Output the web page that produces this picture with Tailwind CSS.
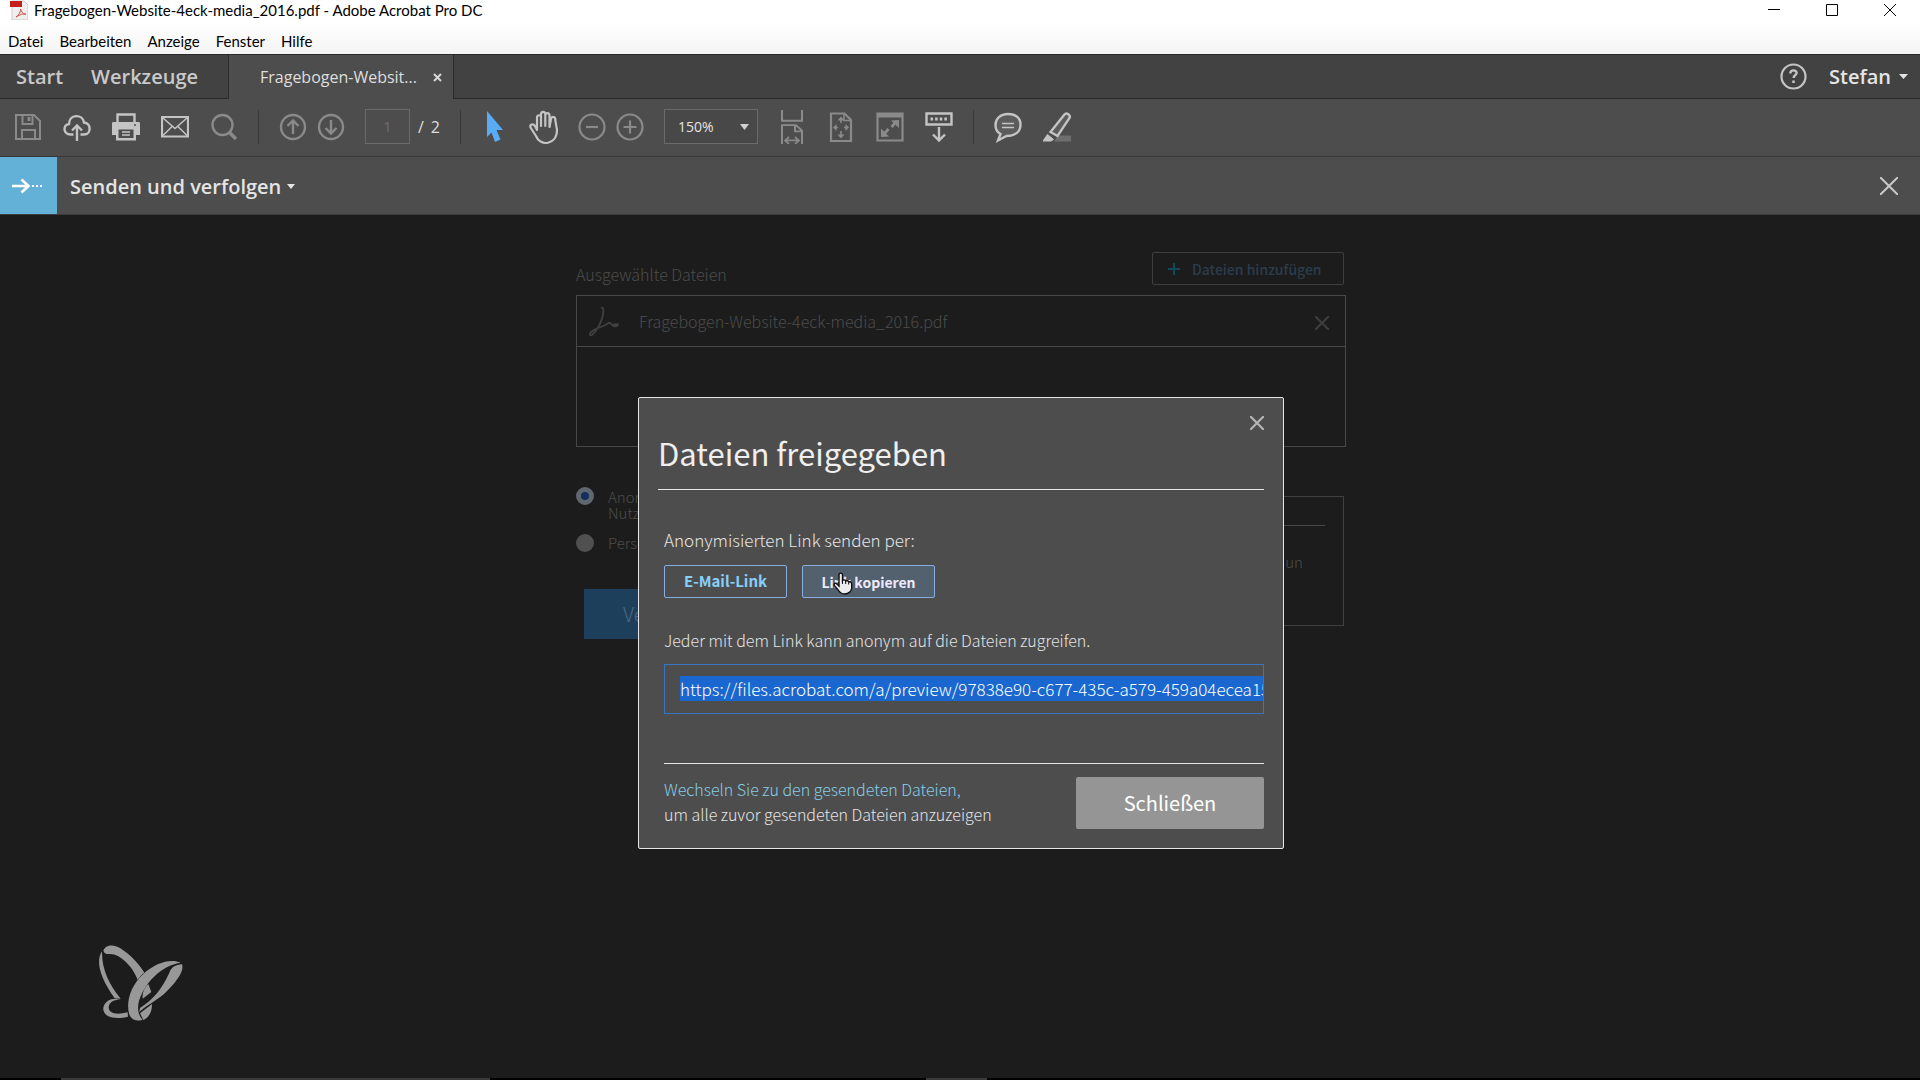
<!DOCTYPE html>
<html lang="de">
<head>
  <meta charset="UTF-8" />
  <meta name="viewport" content="width=device-width, initial-scale=1.0" />
  <title>Fragebogen-Website-4eck-media_2016.pdf - Adobe Acrobat Pro DC</title>
  <script src="https://cdn.jsdelivr.net/npm/@tailwindcss/browser@4"></script>
</head>
<body class="flex min-h-screen flex-col bg-[#1c1c1c] font-['Open_Sans',sans-serif] text-[#e4e4e4]">

  <!-- Titelleiste -->
  <header class="bg-white font-['Lato',sans-serif] text-[15px] leading-5 text-black">
    <div class="flex h-[22px] items-center pb-0.5 pl-[10px] pr-6">
      <svg class="mr-1.5 h-5 w-[18px]" viewBox="0 0 18 20">
        <path d="M2 1h12l4 4v15H2z" fill="#f1eeee" stroke="#cfcaca" stroke-width="1" />
        <path d="M0 1h12v6H0z" fill="#c41f1f" />
        <path d="M6 17c3-2 5-6 4.500-8 2 5 4 6 5.500 5-2-.8-6 .5-10 3z" fill="none" stroke="#c9504c" stroke-width="1" />
      </svg>
      <h1 class="flex-1 whitespace-nowrap">Fragebogen-Website-4eck-media_2016.pdf - Adobe Acrobat Pro DC</h1>
      <div class="flex items-center gap-[46px]">
        <button type="button" aria-label="Minimieren"><svg class="block size-3" viewBox="0 0 12 12"><path d="M0 5.500h12" stroke="#000" /></svg></button>
        <button type="button" aria-label="Maximieren"><svg class="block size-3" viewBox="0 0 12 12"><path d="M.5.500h11v11H.5z" fill="none" stroke="#000" /></svg></button>
        <button type="button" aria-label="Fenster schließen"><svg class="block size-3" viewBox="0 0 12 12"><path d="M0 0l12 12M12 0L0 12" stroke="#000" /></svg></button>
      </div>
    </div>
    <nav class="flex h-8 items-center gap-4 bg-linear-to-b from-white to-[#f4f4f4] pl-2 pt-1.5">
      <a href="#">Datei</a>
      <a href="#">Bearbeiten</a>
      <a href="#">Anzeige</a>
      <a href="#">Fenster</a>
      <a href="#">Hilfe</a>
    </nav>
  </header>

  <!-- Registerkarten -->
  <div class="flex h-[45px] border-t border-[#2a2a2a] bg-[#424242]">
    <div class="flex w-[229px] items-center gap-7 border-b border-r border-[#2a2a2a] pl-4 text-xl font-semibold text-[#c9c9c9]">
      <a href="#">Start</a>
      <a href="#">Werkzeuge</a>
    </div>
    <div class="flex w-[224px] items-center gap-4 bg-[#4d4d4d] pl-[31px] text-base text-[#dedede]">
      <span class="whitespace-nowrap">Fragebogen-Websit...</span>
      <button type="button" aria-label="Registerkarte schließen"><svg class="block size-[9px]" viewBox="0 0 9 9"><path d="M1 1l7 7M8 1L1 8" stroke="#d6d6d6" stroke-width="2" /></svg></button>
    </div>
    <div class="flex flex-1 items-center justify-end border-b border-l border-[#2a2a2a] pr-3">
      <button type="button" aria-label="Hilfe" class="mr-[22px]">
        <svg class="block size-[27px]" viewBox="0 0 27 27" fill="none" stroke="#c4c4c4">
          <circle cx="13.500" cy="13.500" r="12" stroke-width="2.200" />
          <path d="M10.300 10.500c.2-4.200 6.600-3.900 6.300-.4-.2 2-3 2-3 5" stroke-width="2.400" />
          <path d="M13.500 17.500v2.500" stroke-width="2.600" />
        </svg>
      </button>
      <button type="button" class="flex items-center gap-2 text-xl font-semibold">
        Stefan
        <svg class="h-[5px] w-[9px]" viewBox="0 0 9 5"><path d="M0 0h9L4.500 5z" fill="#e4e4e4" /></svg>
      </button>
    </div>
  </div>

  <!-- Werkzeugleiste -->
  <div class="flex h-[58px] items-center gap-5 border-b border-[#383838] bg-[#4d4d4d] pb-0.5 pl-[14px] text-[#c4c4c4]">
    <div class="flex gap-[21px]">
      <button type="button" aria-label="Speichern" class="text-[#8a8a8a]">
        <svg class="block size-7" viewBox="0 0 28 28" fill="none" stroke="currentColor" stroke-width="2">
          <path d="M2 2h18l6 6v18H2z" />
          <path d="M8 26v-9h13v9M8.500 2v9h10V2" />
          <path d="M15 4v4" stroke-width="3" />
        </svg>
      </button>
      <button type="button" aria-label="Hochladen">
        <svg class="block size-7" viewBox="0 0 28 28" fill="none" stroke="currentColor" stroke-width="2.400">
          <path d="M10.500 21.500H7.500C0 21.500-.5 11.500 6 11c0-10 13.500-10.500 15-1.500 7.500.5 7.500 12 0 12h-3.500" />
          <path d="M14 28V13M9 17.500l5-5 5 5" />
        </svg>
      </button>
      <button type="button" aria-label="Drucken">
        <svg class="block size-7" viewBox="0 0 28 28">
          <path d="M5.500 10V1.500h17V10" fill="none" stroke="currentColor" stroke-width="2.400" />
          <path d="M1.500 9h25c1 0 1.500.5 1.500 1.500V22h-4v5.500H4V22H0V10.500C0 9.500.5 9 1.500 9z" fill="currentColor" />
          <path d="M6.500 16.500h15V25h-15z" fill="#4d4d4d" />
          <path d="M10 19h8M10 22h8" stroke="currentColor" stroke-width="1.500" />
          <circle cx="23" cy="12" r="1" fill="#4d4d4d" />
        </svg>
      </button>
      <button type="button" aria-label="E-Mail">
        <svg class="block size-7" viewBox="0 0 28 28" fill="none" stroke="currentColor">
          <path d="M1 4h26v19.500H1z" stroke-width="2.200" />
          <path d="M2 5l12 10.500L26 5M2 22.500l9-9M26 22.500l-9-9" stroke-width="1.500" />
        </svg>
      </button>
      <button type="button" aria-label="Suchen" class="text-[#8a8a8a]">
        <svg class="block size-7" viewBox="0 0 28 28" fill="none" stroke="currentColor">
          <circle cx="12.500" cy="12" r="10" stroke-width="2.400" />
          <path d="M19.500 19.500l6.500 6.500" stroke-width="3.400" />
        </svg>
      </button>
    </div>
    <div class="h-[34px] w-px bg-[#383838]"></div>
    <div class="flex gap-[10px] text-[#8a8a8a]">
      <button type="button" aria-label="Vorherige Seite">
        <svg class="block size-7" viewBox="0 0 28 28" fill="none" stroke="currentColor" stroke-width="2.400">
          <circle cx="14" cy="14" r="12" />
          <path d="M14 21V8M8.500 13L14 7.500l5.500 5.500" />
        </svg>
      </button>
      <button type="button" aria-label="Nächste Seite">
        <svg class="block size-7" viewBox="0 0 28 28" fill="none" stroke="currentColor" stroke-width="2.400">
          <circle cx="14" cy="14" r="12" />
          <path d="M14 7v13M8.500 15l5.500 5.500 5.500-5.500" />
        </svg>
      </button>
    </div>
    <div class="flex items-center gap-2 text-base text-[#dedede]">
      <input type="text" aria-label="Seite" value="1" class="h-[35px] w-[45px] border border-[#6a6a6a] text-center text-sm text-[#6f6f6f]" />
      <span class="flex w-[22px] justify-between"><span>/</span><span>2</span></span>
    </div>
    <div class="h-[34px] w-px bg-[#383838]"></div>
    <div class="flex gap-[21px]">
      <button type="button" aria-label="Auswahl">
        <svg class="block h-8 w-7" viewBox="0 0 28 32"><path d="M6 0l16 19h-6.500l4 9.500-5.500 2.500-3.500-9.500L6 26z" fill="#5aabf5" /></svg>
      </button>
      <button type="button" aria-label="Hand">
        <svg class="block h-8 w-7 overflow-visible" viewBox="0 0 28 32" fill="none" stroke="currentColor" stroke-width="2.200" stroke-linejoin="round" stroke-linecap="round">
          <path d="M7 19V6.500c0-3 4-3 4 0V15V3.500c0-3.500 4.300-3.500 4.300 0V15V4.500c0-3.200 4.200-3.200 4.200 0V16l1.500-8c.6-3 4.500-2.500 4.200.5L27 19c0 15-17 17-21 6L.5 16.500c-1-3 2.500-4.300 4.500-1.500L7 19" />
        </svg>
      </button>
    </div>
    <div class="flex gap-[10px] text-[#8a8a8a]">
      <button type="button" aria-label="Verkleinern">
        <svg class="block size-7" viewBox="0 0 28 28" fill="none" stroke="currentColor" stroke-width="2.200"><circle cx="14" cy="14" r="12.500" /><path d="M8 14h12" /></svg>
      </button>
      <button type="button" aria-label="Vergrößern">
        <svg class="block size-7" viewBox="0 0 28 28" fill="none" stroke="currentColor" stroke-width="2.200"><circle cx="14" cy="14" r="12.500" /><path d="M7.500 14h13M14 7.500v13" /></svg>
      </button>
    </div>
    <div class="relative">
      <select aria-label="Zoomstufe" class="block h-[35px] w-[94px] appearance-none border border-[#6a6a6a] bg-[#484848] pl-[13px] text-sm text-[#e4e4e4]">
        <option>150%</option>
      </select>
      <svg class="pointer-events-none absolute right-[9px] top-[15px] h-[6px] w-[9px]" viewBox="0 0 9 6"><path d="M0 0h9L4.500 6z" fill="#d0d0d0" /></svg>
    </div>
    <div class="flex items-center gap-[21px] text-[#8a8a8a]">
      <button type="button" aria-label="Fensterbreite">
        <svg class="block h-[34px] w-7" viewBox="0 0 28 38" preserveAspectRatio="none" fill="none" stroke="currentColor" stroke-width="2">
          <path d="M4 0v12h20V0" />
          <path d="M4 38V17h14l6 6v15M17 17v7h7" />
          <path d="M8 34h12M11 30l-4 4 4 4M17 30l4 4-4 4" stroke-width="1.800" />
        </svg>
      </button>
      <button type="button" aria-label="Ganze Seite">
        <svg class="block h-[34px] w-7" viewBox="0 0 28 34" fill="none" stroke="currentColor" stroke-width="2.200">
          <path d="M4 3.500h13.500l6.500 6.500v21H4z" />
          <path d="M17 3.500v7h6" stroke-width="1.500" />
          <path d="M14 13V9M14 21v4M11 17.500H8M17 17.500h4" stroke-width="1.600" />
          <path d="M14 6.500l3.500 4h-7zM14 28.500l3.500-4h-7zM6 17.500l3.500-3.500v7zM22 17.500l-3.500-3.500v7z" fill="currentColor" stroke="none" />
        </svg>
      </button>
      <button type="button" aria-label="Vollbild">
        <svg class="block h-[34px] w-7" viewBox="0 0 28 34" fill="none" stroke="currentColor">
          <path d="M1.500 3.500h25v27h-25z" stroke-width="2.200" />
          <path d="M1 5.500h26" stroke-width="4" />
          <path d="M20 12l-4.500 5M8 24l4.500-5" stroke-width="2.800" />
          <path d="M23 10v8l-8-7.500zM5 27v-8.500l8 8z" fill="currentColor" stroke="none" />
        </svg>
      </button>
      <button type="button" aria-label="Leiste einblenden" class="text-[#c4c4c4]">
        <svg class="block h-[34px] w-7" viewBox="0 0 28 34" fill="none" stroke="currentColor" stroke-width="2.400">
          <path d="M1.500 3.500h25v11h-25z" />
          <path d="M5.500 9h17" stroke-width="3" stroke-dasharray="2.600 2" />
          <path d="M14 17v13M8 24.500l6 6 6-6" />
        </svg>
      </button>
    </div>
    <div class="h-[34px] w-px bg-[#383838]"></div>
    <div class="flex gap-[21px]">
      <button type="button" aria-label="Kommentar">
        <svg class="block h-[34px] w-7" viewBox="0 0 28 34" fill="none" stroke="currentColor">
          <path d="M14 4C6 4 1.500 9 1.500 15c0 4.500 2 7.500 5 9L4 30.500l8.500-4.500c9.500 0 14-5 14-11.500S22 4 14 4z" fill="#5c5c5c" stroke-width="2.400" />
          <path d="M8 13.500h12M8 17.500h12" stroke-width="1.600" />
        </svg>
      </button>
      <button type="button" aria-label="Hervorheben">
        <svg class="block h-[34px] w-7" viewBox="0 0 28 34">
          <path d="M15 25.500h13v6H11z" fill="#6e6e6e" />
          <path d="M7.500 22L21.500 4.500c2-2.500 6.500.5 5 3.500L14.500 26z" fill="#5c5c5c" stroke="currentColor" stroke-width="2.400" />
          <path d="M4.500 24.500l6 5-2.500 1.500H0z" fill="currentColor" stroke="currentColor" />
        </svg>
      </button>
    </div>
  </div>

  <!-- Kopfzeile des aktiven Werkzeugs -->
  <div class="flex h-[58px] items-center border-b border-[#3c3c3c] bg-[#4d4d4d] pr-[22px]">
    <div class="flex size-[57px] items-center justify-center bg-[#63b1d6] pr-1">
      <svg class="h-4 w-[30px]" viewBox="0 0 30 16" fill="none" stroke="#fff">
        <path d="M0 8h16M9.500 1.500L16.500 8l-7 6.500" stroke-width="2.600" />
        <path d="M20 8h10" stroke-width="2" stroke-dasharray="2 2" />
      </svg>
    </div>
    <button type="button" class="ml-[13px] flex items-center gap-1.5 pt-0.5 text-xl font-semibold">
      Senden und verfolgen
      <svg class="h-[5px] w-2" viewBox="0 0 8 5"><path d="M0 0h8L4 5z" fill="#e4e4e4" /></svg>
    </button>
    <button type="button" aria-label="Werkzeug schließen" class="ml-auto">
      <svg class="block size-[18px]" viewBox="0 0 18 18"><path d="M0 0l18 18M18 0L0 18" stroke="#c9c9c9" stroke-width="2" /></svg>
    </button>
  </div>

  <!-- Arbeitsbereich -->
  <main class="relative flex-1 pl-0.5 font-['Noto_Sans_CJK_JP','Liberation_Sans',sans-serif]">
    <section class="mx-auto w-[770px] pt-[37px] text-[#4c4c4c]">
      <div class="flex items-end justify-between pr-0.5">
        <h2 class="pb-px text-base font-light leading-5">Ausgewählte Dateien</h2>
        <button type="button" class="flex h-[33px] w-48 items-center gap-3 rounded-xs border border-[#3d3f42] pl-[15px] text-sm font-medium text-[#2b3d4c]">
          <svg class="size-3" viewBox="0 0 12 12"><path d="M6 0v12M0 6h12" stroke="#12485c" stroke-width="2" /></svg>
          Dateien hinzufügen
        </button>
      </div>
      <div class="mt-[10px] h-[152px] border border-[#484848]">
        <div class="flex h-[51px] items-center border-b border-[#484848] pl-3 pr-4">
          <svg class="h-[30px] w-[30px]" viewBox="0 0 30 30" fill="none" stroke="#404040" stroke-width="1.800">
            <path d="M12 2c2.500-2 3 3 1.500 9S7 26 3 29c-3 1-3-2 1-4.500S15 20 18 18s3-1.500 5 1 5 1 6 0-3-1-6 0" />
          </svg>
          <span class="ml-5 flex-1 text-base font-light leading-5">Fragebogen-Website-4eck-media_2016.pdf</span>
          <button type="button" aria-label="Datei entfernen" class="pt-1"><svg class="block size-[14px]" viewBox="0 0 14 14"><path d="M0 0l14 14M14 0L0 14" stroke="#3e3e3e" stroke-width="2" /></svg></button>
        </div>
      </div>
      <div class="flex justify-between pr-0.5 pt-10">
        <div class="w-[300px] text-[15px] font-light leading-4">
          <label class="flex items-start gap-[14px]">
            <input type="radio" name="freigabe" checked class="size-[18px] appearance-none rounded-full border-[5px] border-[#5f6870] bg-[#12305c]" />
            <span class="pt-0.5">Anonym<br />Nutzer</span>
          </label>
          <label class="mt-[13px] flex items-center gap-[14px]">
            <input type="radio" name="freigabe" class="size-[18px] appearance-none rounded-full bg-[#505050]" />
            <span>Person</span>
          </label>
          <button type="button" class="ml-2 mt-[37px] h-[50px] w-[200px] bg-[#1e3f5b] pl-[39px] text-left text-xl text-[#4f6a80]">Verfolgen</button>
        </div>
        <aside class="mt-[9px] h-[130px] w-[300px] border border-[#404040] px-[18px] text-[15px] font-light">
          <div class="mt-7 border-b border-[#484848]"></div>
          <p class="mt-[26px] pr-[22px] text-right leading-5">un</p>
        </aside>
      </div>
    </section>

    <!-- Dialog -->
    <div class="absolute inset-x-0 top-0 flex justify-center pl-0.5 pt-[182px]">
      <div role="dialog" aria-labelledby="dialogTitel" class="w-[646px] rounded-xs border border-[#e6e6e6] bg-[#4d4d4d] px-[19px] pb-[19px] pt-[18px]">
        <div class="flex justify-end">
          <button type="button" aria-label="Dialog schließen"><svg class="block size-[14px]" viewBox="0 0 14 14"><path d="M0 0l14 14M14 0L0 14" stroke="#b4b4b4" stroke-width="2.200" /></svg></button>
        </div>
        <h2 id="dialogTitel" class="mt-[3px] border-b border-[#e6e6e6] pb-4 text-[31px] leading-10 text-[#efefef]">Dateien freigegeben</h2>
        <div class="pl-1.5">
          <p class="mt-10 text-[17px] font-light leading-5">Anonymisierten Link senden per:</p>
          <div class="mt-[15px] flex gap-[15px] text-[15px]">
            <button type="button" class="h-[33px] w-[123px] rounded-xs border border-[#86aede] font-bold text-[#86d0f8]">E-Mail-Link</button>
            <button type="button" class="relative h-[33px] w-[133px] rounded-xs border border-[#86aede] bg-[#53616f] text-sm font-bold text-[#efe9fb]">
              Link kopieren
              <!-- Mauszeiger -->
              <svg class="absolute left-[30px] top-1.5 h-[23px] w-5" viewBox="0 0 20 23">
                <path d="M6 14V3c0-2.500 3.500-2.500 3.500 0v5.500c1-1 3-.8 3.200.6 1-.8 2.800-.5 3 .9 1.300-.6 3 .2 3 1.700V16c0 3-3 6-7 6-3.500 0-5-1.500-6.500-4L1.300 13.500c-.8-2 1.500-3 2.700-1.500z" fill="#ececec" stroke="#111" stroke-width="1.400" />
                <path d="M9.500 8.500V12M12.700 9.500V12M15.700 10.500v2" stroke="#111" />
              </svg>
            </button>
          </div>
          <label for="freigabeLink" class="mt-8 block text-base font-light leading-5">Jeder mit dem Link kann anonym auf die Dateien zugreifen.</label>
          <input id="freigabeLink" type="text" readonly value="https://files.acrobat.com/a/preview/97838e90-c677-435c-a579-459a04ecea15"
            class="mt-[14px] block h-[50px] w-full border border-[#3a76bd] pb-0.5 pl-[15px] text-[17px] font-light text-white outline-none selection:bg-[#1a68cf] selection:text-white" />
          <div class="mt-[49px] flex justify-between border-t border-[#e6e6e6] pt-[13px]">
            <p class="text-base font-light leading-[25px]">
              <a href="#" class="text-[#86cfe8]">Wechseln Sie zu den gesendeten Dateien,</a><br />
              um alle zuvor gesendeten Dateien anzuzeigen
            </p>
            <button type="button" class="h-[52px] w-[188px] rounded-xs bg-[#959595] text-xl text-white">Schließen</button>
          </div>
        </div>
      </div>
    </div>

    <!-- Logo -->
    <svg class="absolute bottom-[56px] left-[98px] h-[78px] w-[86px]" viewBox="54 42 258 234" fill="#989898">
      <path d="M70 62C76 43 102 42 120 54C152 74 178 104 193 128C184 134 178 142 173 150C160 112 122 72 90 72C80 72 74 72 70 62Z" />
      <path d="M66 64C46 94 60 142 104 205L122 206C88 165 65 118 66 64Z" />
      <path d="M122 208C88 200 68 220 70 240C76 268 118 266 144 260L143 247C112 255 86 252 86 232C88 218 98 210 122 208Z" />
      <path d="M302 98C272 85 226 98 190 132C152 166 138 216 147 250C152 270 172 276 188 269C168 250 172 218 186 190C208 146 250 106 302 98Z" />
      <path d="M306 103C314 122 288 158 252 192C222 216 192 232 178 246L180 234C222 206 246 176 268 128C274 112 286 104 306 103Z" />
      <path d="M205 162L214 186L188 206C186 188 194 172 205 162Z" />
      <path d="M216 222C216 244 208 262 190 270L180 250Z" />
    </svg>
  </main>

  <!-- Rand der Taskleiste -->
  <footer class="flex h-0.5 bg-black">
    <div class="ml-[61px] w-[429px] bg-[#3a3a3a]"></div>
    <div class="ml-[436px] w-[61px] bg-[#3a3a3a]"></div>
  </footer>

  <script>
    // Link gleich markieren, Anfang bleibt sichtbar
    const link = document.getElementById("freigabeLink");
    link.focus();
    link.setSelectionRange(0, link.value.length, "backward");
    link.scrollLeft = 0;
  </script>
</body>
</html>
